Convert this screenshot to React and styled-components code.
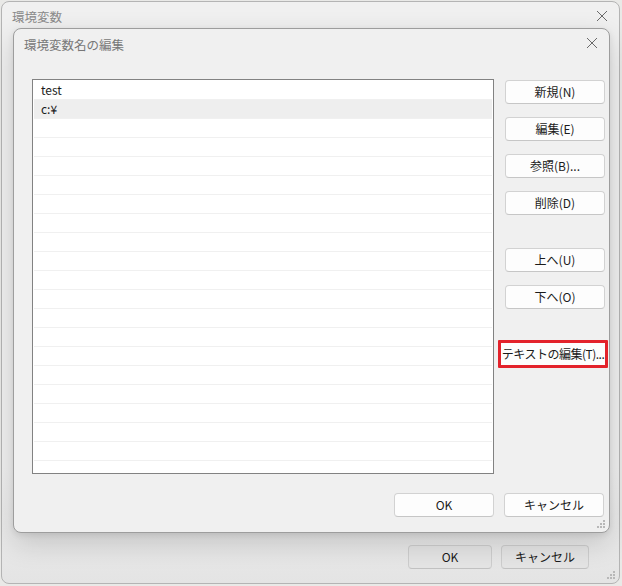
import styled, { createGlobalStyle } from "styled-components";

const GlobalStyle = createGlobalStyle`
  html, body {
    margin: 0;
    padding: 0;
    background: #e9e9e7;
  }
  body {
    font-family: "Noto Sans CJK JP", "Noto Sans", sans-serif;
    font-size: 12px;
    color: #1b1b1b;
  }
`;

const Desktop = styled.div`
  position: relative;
  width: 622px;
  height: 586px;
  padding: 1px 0 0 1px;
  box-sizing: border-box;
`;

const Window = styled.div`
  position: relative;
  width: 619px;
  height: 583px;
  box-sizing: border-box;
  border: 1px solid #b4b4b4;
  border-radius: 8px;
  background: linear-gradient(#f0f0f0 0%, #f0f0f0 80%, #e4e4e4 100%);
  display: flex;
  flex-direction: column;
  overflow: hidden;
`;

const TitleBar = styled.div`
  height: 28px;
  display: flex;
  align-items: center;
  justify-content: space-between;
  padding: 0 10px 0 10px;
  color: ${(p) => (p.$inactive ? "#8a8a8a" : "#777")};
  font-size: 12.5px;
`;

const CloseBtn = styled.span`
  display: flex;
  width: 14px;
  height: 14px;
  align-items: center;
  justify-content: center;
`;

const Spacer = styled.div`
  flex: 1;
`;

const Footer = styled.div`
  display: flex;
  justify-content: flex-end;
  gap: 9px;
  padding: 0 30px 14px 0;
`;

const Button = styled.button`
  box-sizing: border-box;
  width: ${(p) => p.$w || 100}px;
  height: 24px;
  margin-top: ${(p) => p.$mt || 0}px;
  border: 1px solid ${(p) => (p.$dim ? "#cdcdcd" : "#d2d2d2")};
  border-bottom-color: ${(p) => (p.$dim ? "#c2c2c2" : "#c6c6c6")};
  border-radius: 4px;
  background: ${(p) => (p.$dim ? "#e4e4e4" : "#fdfdfd")};
  font-family: "Noto Sans CJK JP", "Noto Sans", sans-serif;
  font-size: 12px;
  color: #1b1b1b;
  padding: 0;
  line-height: 20px;
  white-space: nowrap;
`;

const HighlightButton = styled(Button)`
  width: 110px;
  height: 28px;
  margin-left: -7px;
  border: 3px solid #e3222b;
  border-radius: 1px;
  background: #fdfdfd;
  letter-spacing: -0.5px;
  overflow: hidden;
`;

const Dialog = styled.div`
  position: absolute;
  left: 13px;
  top: 28px;
  width: 597px;
  height: 505px;
  box-sizing: border-box;
  border: 1px solid #9d9d9d;
  border-radius: 8px;
  background: #f0f0f0;
  box-shadow: 0 10px 28px rgba(0, 0, 0, 0.16), 0 2px 6px rgba(0, 0, 0, 0.08);
  display: flex;
  flex-direction: column;
`;

const DialogTitle = styled.span`
  padding-top: 3px;
`;

const DialogBody = styled.div`
  flex: 1;
  display: grid;
  grid-template-columns: 462px 100px;
  column-gap: 11px;
  padding: 22px 0 0 18px;
`;

const ListBox = styled.div`
  box-sizing: border-box;
  height: 395px;
  border: 1px solid #828282;
  background: #fff;
  padding: 1px 1px 0 1px;
  overflow: hidden;
`;

const Row = styled.div`
  height: 19px;
  box-sizing: border-box;
  border-bottom: 1px solid #f0f0f0;
  background: ${(p) => (p.$selected ? "#eeeeee" : "#fff")};
  padding-left: 7px;
  line-height: 18px;
  font-size: 12px;
  color: #1b1b1b;
`;

const ButtonColumn = styled.div`
  display: flex;
  flex-direction: column;
  padding-top: 1px;
`;

const DialogFooter = styled.div`
  display: flex;
  justify-content: flex-end;
  gap: 10px;
  padding: 0 5px 15px 0;
`;

const Grip = styled.svg`
  position: absolute;
  right: 3px;
  bottom: 3px;
`;

function CloseIcon() {
  return (
    <svg width="12" height="12" viewBox="0 0 12 12">
      <path d="M1 1 L11 11 M11 1 L1 11" stroke="#6a6a6a" strokeWidth="1" fill="none" />
    </svg>
  );
}

function GripIcon() {
  const dots = [
    [8, 2],
    [5, 5],
    [8, 5],
    [2, 8],
    [5, 8],
    [8, 8],
  ];
  return (
    <Grip width="10" height="10" viewBox="0 0 10 10">
      {dots.map(([x, y]) => (
        <rect key={`${x}-${y}`} x={x - 1} y={y - 1} width="2" height="2" fill="#b8b8b8" />
      ))}
    </Grip>
  );
}

const rows = ["test", "c:¥"];

export default function App() {
  const filler = Array.from({ length: 21 - rows.length });
  return (
    <>
      <GlobalStyle />
      <Desktop>
        <Window>
          <TitleBar $inactive>
            <span>環境変数</span>
            <CloseBtn>
              <CloseIcon />
            </CloseBtn>
          </TitleBar>
          <Spacer />
          <Footer>
            <Button $dim $w={84}>OK</Button>
            <Button $dim $w={88}>キャンセル</Button>
          </Footer>
          <GripIcon />
        </Window>

        <Dialog>
          <TitleBar>
            <DialogTitle>環境変数名の編集</DialogTitle>
            <CloseBtn>
              <CloseIcon />
            </CloseBtn>
          </TitleBar>
          <DialogBody>
            <ListBox>
              {rows.map((r, i) => (
                <Row key={r} $selected={i === 1}>
                  {r}
                </Row>
              ))}
              {filler.map((_, i) => (
                <Row key={i} />
              ))}
            </ListBox>
            <ButtonColumn>
              <Button>新規(N)</Button>
              <Button $mt={13}>編集(E)</Button>
              <Button $mt={13}>参照(B)...</Button>
              <Button $mt={13}>削除(D)</Button>
              <Button $mt={33}>上へ(U)</Button>
              <Button $mt={13}>下へ(O)</Button>
              <HighlightButton $mt={31}>テキストの編集(T)...</HighlightButton>
            </ButtonColumn>
          </DialogBody>
          <DialogFooter>
            <Button>OK</Button>
            <Button>キャンセル</Button>
          </DialogFooter>
          <GripIcon />
        </Dialog>
      </Desktop>
    </>
  );
}
